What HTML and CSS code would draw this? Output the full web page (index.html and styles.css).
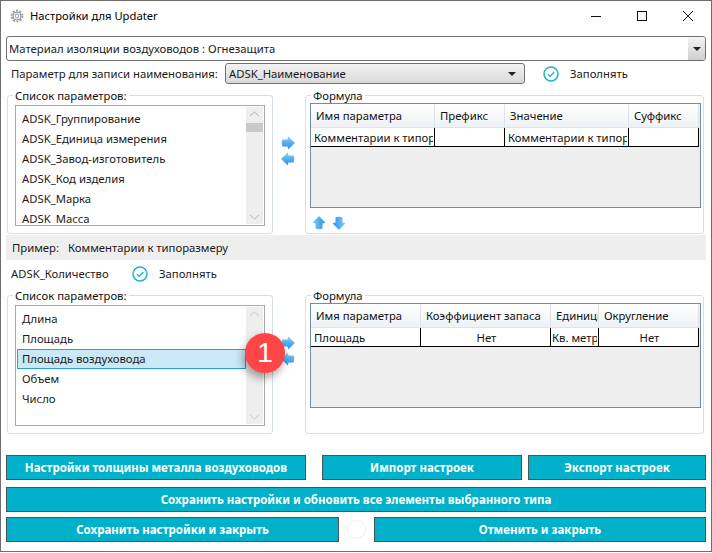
FILE: index.html
```html
<!DOCTYPE html>
<html>
<head>
  <title>Настройки для Updater</title>
  <link rel="stylesheet" href="styles.css">
</head>
<body>
  <svg width="0" height="0" class="defs">
    <defs>
      <linearGradient id="blue" x1="0" y1="0" x2="0" y2="1">
        <stop offset="0" stop-color="#7ccaf8"/>
        <stop offset="1" stop-color="#2c94ea"/>
      </linearGradient>
      <symbol id="arrow" viewBox="0 0 14 14">
        <path d="M7.5 1.2 L13.4 7 L7.5 12.8 L7 10 L1.6 10 Q0.8 7 1.6 4 L7 4 Z" fill="url(#blue)" stroke="url(#blue)" stroke-width="1" stroke-linejoin="round"/>
      </symbol>
      <symbol id="check" viewBox="0 0 16 16">
        <circle cx="8" cy="8" r="7" fill="none" stroke="#1cb4cc" stroke-width="1.5"/>
        <path d="M4.8 8.2 L7.2 10.4 L11.2 6" fill="none" stroke="#1cb4cc" stroke-width="1.3"/>
      </symbol>
    </defs>
  </svg>

  <div class="okno">
    <div class="titulo">
      <svg class="gear" width="14" height="14" viewBox="0 0 14 14">
        <circle cx="7" cy="7" r="5.4" fill="none" stroke="#a0a0a0" stroke-width="2" stroke-dasharray="2 1.4"/>
        <circle cx="7" cy="7" r="4" fill="none" stroke="#8f8f8f" stroke-width="1"/>
        <circle cx="7" cy="7" r="1.8" fill="none" stroke="#a8a8a8" stroke-width="1.2"/>
      </svg>
      <span class="titulo-texto">Настройки для Updater</span>
      <div class="controles">
        <svg width="46" height="36" viewBox="0 0 46 36"><path d="M18 15.5 H28" stroke="#111" fill="none"/></svg>
        <svg width="46" height="36" viewBox="0 0 46 36"><rect x="18.5" y="10.5" width="9" height="9" stroke="#111" fill="none"/></svg>
        <svg width="46" height="36" viewBox="0 0 46 36"><path d="M18 10 L28 20 M28 10 L18 20" stroke="#111" fill="none"/></svg>
      </div>
    </div>

    <div class="combo combo-branco">
      <span>Материал изоляции воздуховодов : Огнезащита</span>
      <span class="combo-seta"><i class="tri"></i></span>
    </div>

    <div class="linha linha-param">
      <span class="rotulo">Параметр для записи наименования:</span>
      <div class="combo combo-cinza">
        <span>ADSK_Наименование</span>
        <i class="tri"></i>
      </div>
      <svg class="check" width="16" height="16"><use href="#check"/></svg>
      <span>Заполнять</span>
    </div>

    <div class="painel">
      <fieldset class="grupo">
        <legend>Список параметров:</legend>
        <div class="lista">
          <ul>
            <li>ADSK_Группирование</li>
            <li>ADSK_Единица измерения</li>
            <li>ADSK_Завод-изготовитель</li>
            <li>ADSK_Код изделия</li>
            <li>ADSK_Марка</li>
            <li>ADSK_Масса</li>
          </ul>
          <div class="rolagem">
            <svg width="17" height="14" viewBox="0 0 17 14"><path d="M4 9 L8.5 5 L13 9" fill="none" stroke="#b4b4b4"/></svg>
            <div class="polegar"></div>
            <svg class="baixo" width="17" height="14" viewBox="0 0 17 14"><path d="M4 5 L8.5 9 L13 5" fill="none" stroke="#b4b4b4"/></svg>
          </div>
        </div>
      </fieldset>
      <div class="setas">
        <svg width="14" height="14"><use href="#arrow"/></svg>
        <svg class="esq" width="14" height="14"><use href="#arrow"/></svg>
      </div>
      <fieldset class="grupo grupo-formula">
        <legend>Формула</legend>
        <div class="grade">
          <table class="tab-a">
            <tr><th>Имя параметра</th><th>Префикс</th><th>Значение</th><th>Суффикс</th></tr>
            <tr><td><div>Комментарии к типоразмеру</div></td><td></td><td><div>Комментарии к типоразмеру</div></td><td></td></tr>
          </table>
        </div>
        <div class="mover">
          <svg class="cima" width="14" height="14"><use href="#arrow"/></svg>
          <svg class="desce" width="14" height="14"><use href="#arrow"/></svg>
        </div>
      </fieldset>
    </div>

    <div class="exemplo"><span>Пример:</span><span>Комментарии к типоразмеру</span></div>

    <div class="linha linha-qtd">
      <span>ADSK_Количество</span>
      <svg class="check" width="16" height="16"><use href="#check"/></svg>
      <span>Заполнять</span>
    </div>

    <div class="painel">
      <fieldset class="grupo">
        <legend>Список параметров:</legend>
        <div class="lista">
          <ul>
            <li>Длина</li>
            <li>Площадь</li>
            <li class="sel">Площадь воздуховода</li>
            <li>Объем</li>
            <li>Число</li>
          </ul>
          <div class="rolagem">
            <svg width="17" height="14" viewBox="0 0 17 14"><path d="M4 9 L8.5 5 L13 9" fill="none" stroke="#c8c8c8"/></svg>
            <svg class="baixo" width="17" height="14" viewBox="0 0 17 14"><path d="M4 5 L8.5 9 L13 5" fill="none" stroke="#c8c8c8"/></svg>
          </div>
        </div>
      </fieldset>
      <div class="setas">
        <svg width="14" height="14"><use href="#arrow"/></svg>
        <svg class="esq" width="14" height="14"><use href="#arrow"/></svg>
      </div>
      <fieldset class="grupo grupo-formula">
        <legend>Формула</legend>
        <div class="grade">
          <table class="tab-b">
            <tr><th>Имя параметра</th><th>Коэффициент запаса</th><th>Единицы</th><th>Округление</th></tr>
            <tr><td><div>Площадь</div></td><td class="cen"><div>Нет</div></td><td class="estreito"><div>Кв. метры</div></td><td class="cen"><div>Нет</div></td></tr>
          </table>
        </div>
      </fieldset>
      <div class="marca">1</div>
    </div>

    <div class="botoes botoes-1">
      <button class="btn">Настройки толщины металла воздуховодов</button>
      <button class="btn">Импорт настроек</button>
      <button class="btn">Экспорт настроек</button>
    </div>
    <div class="botoes botoes-2">
      <button class="btn">Сохранить настройки и обновить все элементы выбранного типа</button>
    </div>
    <div class="botoes botoes-3">
      <button class="btn">Сохранить настройки и закрыть</button>
      <span class="circulo"></span>
      <button class="btn">Отменить и закрыть</button>
    </div>
  </div>
</body>
</html>
```

FILE: styles.css
```css
html, body {
  margin: 0;
  padding: 0;
  background: #fff;
}
body {
  font-family: "Noto Sans", "Open Sans", sans-serif;
  font-size: 11.3px;
  color: #1a1a1a;
  height: 553px;
  overflow: hidden;
}
.defs {
  position: absolute;
}
.okno {
  box-sizing: border-box;
  width: 712px;
  height: 552px;
  border: 1px solid #6e6e6e;
  padding: 0 5px;
  background: #fff;
}

/* barra de titulo */
.titulo {
  display: flex;
  align-items: flex-start;
  height: 35px;
  margin: 0 -5px;
  padding-left: 9px;
}
.gear {
  margin: 8px 6px 0 0;
}
.titulo-texto {
  font-size: 11.2px;
  line-height: 30px;
  color: #000;
}
.controles {
  margin-left: auto;
  display: flex;
  align-items: flex-start;
  height: 35px;
}
.controles svg {
  display: block;
}

/* combos */
.combo {
  box-sizing: border-box;
  display: flex;
  align-items: center;
  justify-content: space-between;
  border: 1px solid #707070;
  border-radius: 3px;
}
.combo-branco {
  height: 25px;
  padding-left: 2px;
  background: #fff;
  overflow: hidden;
}
.combo-seta {
  width: 17px;
  height: 23px;
  display: flex;
  align-items: center;
  justify-content: center;
  background: linear-gradient(#f4f4f4, #cfcfcf);
}
.combo-cinza {
  width: 300px;
  height: 21px;
  padding: 0 8px 0 3px;
  background: linear-gradient(#f3f3f3, #d9d9d9);
}
.tri {
  display: block;
  width: 0;
  height: 0;
  border-left: 4px solid transparent;
  border-right: 4px solid transparent;
  border-top: 4px solid #222;
}

.linha {
  display: flex;
  align-items: center;
}
.linha-param {
  height: 21px;
  margin-top: 2px;
}
.rotulo {
  width: 219px;
  padding-left: 5px;
  box-sizing: border-box;
  flex: none;
  white-space: nowrap;
}
.linha-param .check {
  margin: 0 11px 0 18px;
}
.linha-qtd {
  box-sizing: border-box;
  height: 23px;
  margin-top: 1px;
  padding-top: 2px;
}
.linha-qtd span:first-child {
  width: 126px;
  padding-left: 5px;
  box-sizing: border-box;
}
.linha-qtd .check {
  margin-right: 11px;
}

/* paineis */
.painel {
  position: relative;
  display: grid;
  grid-template-columns: 266px 32px 399px;
  margin-top: 4px;
  margin-left: 1px;
  height: 146px;
}
.grupo {
  box-sizing: border-box;
  min-width: 0;
  height: 146px;
  margin: 0;
  padding: 2px 7px 0;
  border: 1px solid #d5dfe5;
  border-radius: 3px;
}
.grupo legend {
  margin-left: -2px;
  padding: 1px 2px 0;
  line-height: 14px;
  color: #111;
}
.grupo-formula {
  padding: 0 3px 0 4px;
}
.grupo-formula legend {
  margin-left: 1px;
}

.lista {
  box-sizing: border-box;
  display: flex;
  height: 121px;
  border: 1px solid #a9a9a9;
  background: #fff;
  padding: 1px;
}
.lista ul {
  flex: 1;
  margin: 0;
  padding: 2px 0 0;
  list-style: none;
  overflow: hidden;
}
.lista li {
  box-sizing: border-box;
  height: 20px;
  line-height: 18px;
  padding-left: 4px;
  border: 1px solid transparent;
  white-space: nowrap;
}
.lista li.sel {
  background: #cbe8f6;
  border-color: #26a0da;
}
.rolagem {
  width: 17px;
  display: flex;
  flex-direction: column;
  background: #eeeeee;
}
.rolagem svg {
  display: block;
  flex: none;
}
.rolagem .baixo {
  margin-top: auto;
}
.polegar {
  height: 9px;
  margin-top: 2px;
  background: #c9c9c9;
}

.setas {
  display: flex;
  flex-direction: column;
  gap: 2px;
  padding: 48px 0 0 8px;
}
.setas svg {
  display: block;
}
.esq {
  transform: scaleX(-1);
}
.cima {
  transform: rotate(-90deg);
}
.desce {
  transform: rotate(90deg);
}
.mover {
  display: flex;
  gap: 6px;
  padding: 8px 0 0 2px;
}

/* tabelas */
.grade {
  box-sizing: border-box;
  height: 105px;
  width: 391px;
  border: 1px solid #6e8cb0;
  background: #eeeeee;
}
.grade table {
  border-collapse: separate;
  border-spacing: 0;
  table-layout: fixed;
  width: 388px;
}
.grade th {
  height: 23px;
  padding: 0 0 0 5px;
  font-weight: normal;
  text-align: left;
  white-space: nowrap;
  overflow: hidden;
  background: linear-gradient(#ffffff, #eef1f5);
  border-right: 1px solid #dfe3e8;
  border-bottom: 1px solid #dfe3e8;
  color: #111;
}
.grade td {
  box-sizing: border-box;
  height: 19px;
  padding: 0 1px 0 3px;
  background: #fff;
  border-right: 1px solid #000;
  border-bottom: 1px solid #000;
  color: #111;
}
.grade td div {
  overflow: hidden;
  white-space: nowrap;
}
.grade td.cen {
  text-align: center;
}
.grade td.estreito {
  padding-left: 1px;
}
.tab-a th:nth-child(1) { width: 118px; }
.tab-a th:nth-child(2) { width: 64px; }
.tab-a th:nth-child(3) { width: 118px; }
.tab-b th:nth-child(1) { width: 104px; }
.tab-b th:nth-child(2) { width: 124px; }
.tab-b th:nth-child(3) { width: 42px; }

.exemplo {
  display: flex;
  align-items: center;
  gap: 9px;
  height: 25px;
  margin-top: 1px;
  padding-left: 6px;
  background: #eeeeee;
}

/* marcador vermelho */
.marca {
  position: absolute;
  left: 238px;
  top: 45px;
  width: 40px;
  height: 40px;
  line-height: 39px;
  border-radius: 50%;
  text-align: center;
  font-family: "Liberation Sans", sans-serif;
  font-size: 28px;
  color: #fff;
  background: #ff4545;
  box-shadow: -2px 5px 8px rgba(0, 0, 0, 0.35);
}

/* botoes */
.botoes {
  display: flex;
  height: 25px;
}
.botoes-1 {
  margin-top: 21px;
}
.botoes-2 {
  margin-top: 7px;
}
.botoes-3 {
  margin-top: 5px;
  align-items: center;
}
.btn {
  box-sizing: border-box;
  height: 25px;
  padding: 0;
  border: 1px solid #47555b;
  background: #00b1c9;
  color: #fff;
  font-family: "Noto Sans", "Open Sans", sans-serif;
  font-size: 11.5px;
  font-weight: 700;
}
.botoes-1 .btn:nth-child(1) { width: 300px; margin-right: 16px; }
.botoes-1 .btn:nth-child(2) { width: 200px; margin-right: 6px; }
.botoes-1 .btn:nth-child(3) { width: 178px; }
.botoes-2 .btn { width: 700px; }
.botoes-3 .btn:nth-child(1) { width: 333px; }
.botoes-3 .btn:nth-child(3) { width: 332px; }
.circulo {
  box-sizing: border-box;
  width: 19px;
  height: 19px;
  margin: 0 8px;
  border: 1px solid #eaf0f5;
  border-radius: 50%;
}
```
